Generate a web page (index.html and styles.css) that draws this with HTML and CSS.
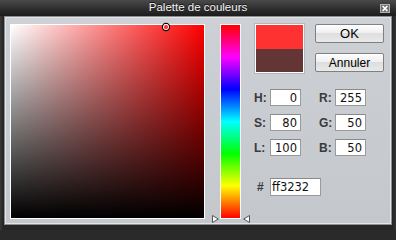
FILE: index.html
```html
<!DOCTYPE html>
<html lang="fr">
<head>
<meta charset="utf-8">
<title>Palette de couleurs</title>
<link rel="stylesheet" href="styles.css">
</head>
<body>
<div class="window">
  <div class="titlebar">
    <span class="title">Palette de couleurs</span>
    <svg class="close" width="10" height="9" viewBox="0 0 10 9">
      <rect x="0.5" y="0.5" width="9" height="8" fill="#707070" stroke="#b0b0b0"/>
      <path d="M2.6 2 L7.4 7 M7.4 2 L2.6 7" stroke="#fff" stroke-width="1.7"/>
    </svg>
  </div>
  <div class="panel">
    <div class="sv">
      <svg class="sv-marker" width="10" height="10" viewBox="0 0 10 10">
        <circle cx="5" cy="5" r="3.6" fill="none" stroke="#000" stroke-width="1.1"/>
        <circle cx="5" cy="5" r="2.6" fill="none" stroke="#fff" stroke-width="0.9"/>
      </svg>
    </div>
    <div class="hue-wrap">
      <div class="hue"></div>
      <svg class="tri tri-left" width="7" height="8" viewBox="0 0 7 8">
        <polygon points="0.5,0.5 6.3,4 0.5,7.5" fill="#fff" stroke="#555" stroke-width="1" stroke-linejoin="round"/>
      </svg>
      <svg class="tri tri-right" width="7" height="8" viewBox="0 0 7 8">
        <polygon points="6.5,0.5 0.7,4 6.5,7.5" fill="#fff" stroke="#555" stroke-width="1" stroke-linejoin="round"/>
      </svg>
    </div>
    <div class="side">
      <div class="top-row">
        <div class="swatch">
          <div class="swatch-new"></div>
          <div class="swatch-old"></div>
        </div>
        <div class="buttons">
          <button class="btn">OK</button>
          <button class="btn">Annuler</button>
        </div>
      </div>
      <div class="fields">
        <span class="lbl">H:</span><input class="fld" value="0" readonly>
        <span class="lbl lbl-right">R:</span><input class="fld" value="255" readonly>
        <span class="lbl">S:</span><input class="fld" value="80" readonly>
        <span class="lbl lbl-right">G:</span><input class="fld" value="50" readonly>
        <span class="lbl">L:</span><input class="fld" value="100" readonly>
        <span class="lbl lbl-right">B:</span><input class="fld" value="50" readonly>
      </div>
      <div class="hex-row">
        <span class="lbl hash">#</span><input class="fld hex" value="ff3232" readonly>
      </div>
    </div>
  </div>
</div>
</body>
</html>
```

FILE: styles.css
```css
* { box-sizing: border-box; }

body {
  margin: 0;
  background: #2a2a2a;
  font-family: "Liberation Sans", Arial, sans-serif;
}

.window {
  width: 396px;
  height: 230px;
  display: flex;
  flex-direction: column;
  background: linear-gradient(to right, #3a3a3a, #262626 3px, #262626 393px, #343434);
}

.titlebar {
  height: 16px;
  position: relative;
  display: flex;
  justify-content: center;
  align-items: flex-start;
  background: linear-gradient(#4a4a4a, #2c2c2c 60%, #1c1c1c);
}

.title {
  font-size: 11.5px;
  line-height: 14px;
  color: #f4f4f4;
  text-shadow: 0 -1px 0 #111;
}

.close {
  position: absolute;
  top: 4px;
  right: 6px;
}

.panel {
  flex: 1;
  margin: 0 4px 5px 4px;
  border: 1px solid #8a8d91;
  box-shadow: inset 0 0 0 1px #e2e4e6;
  background: linear-gradient(#cdd0d4, #c4c7cb);
  display: flex;
  align-items: flex-start;
  padding: 7px 0 0 5px;
}

.sv {
  position: relative;
  width: 195px;
  height: 195px;
  border: 1px solid #fff;
  background:
    linear-gradient(to bottom, rgba(0,0,0,0), #000),
    linear-gradient(to right, #fff, #f00);
}

.sv-marker {
  position: absolute;
  left: 150px;
  top: -3px;
}

.hue-wrap {
  position: relative;
  margin-left: 15px;
}

.hue {
  width: 21px;
  height: 195px;
  border: 1px solid #fff;
  background: linear-gradient(to bottom,
    #f00 0%, #f0f 16.67%, #00f 33.33%, #0ff 50%,
    #0f0 66.67%, #ff0 83.33%, #f00 100%);
}

.tri {
  position: absolute;
  top: 191px;
}

.tri-left { left: -8px; }
.tri-right { left: 23px; }

.side {
  margin-left: 14px;
  display: flex;
  flex-direction: column;
}

.top-row {
  display: flex;
  gap: 11px;
}

.swatch {
  width: 49px;
  height: 49px;
  border: 1px solid #fff;
  box-shadow: 0 0 0 1px #b4b7ba;
  display: flex;
  flex-direction: column;
}

.swatch-new { flex: 1; background: #ff3232; }
.swatch-old { flex: 1; background: #643535; }

.buttons {
  display: flex;
  flex-direction: column;
  gap: 10px;
}

.btn {
  width: 69px;
  height: 19px;
  padding: 0;
  border: 1px solid #808080;
  border-radius: 2px;
  background: linear-gradient(#fdfdfd, #efefef 50%, #dedede 50%, #e9e9e9);
  box-shadow: inset 0 1px 0 #fff;
  font-family: "Liberation Sans", Arial, sans-serif;
  font-size: 12px;
  color: #000;
}

.btn:first-child { font-size: 13px; }

.fields {
  margin-top: 16px;
  margin-left: -1px;
  display: grid;
  grid-template-columns: 16px 31px 34px 31px;
  grid-auto-rows: 17px;
  row-gap: 8px;
}

.lbl {
  display: flex;
  align-items: center;
  font-weight: bold;
  font-size: 12px;
  color: #3a3a3a;
}

.lbl-right { padding-left: 18px; }

.fld {
  width: 31px;
  height: 17px;
  margin: 0;
  padding: 0 3px 0 0;
  border: 1px solid #9a9a9a;
  border-top-color: #8a8a8a;
  background: #fff;
  font-family: "DejaVu Sans", sans-serif;
  font-size: 11.5px;
  color: #111;
  text-align: right;
  outline: none;
}

.hex-row {
  margin-top: 22px;
  display: flex;
  align-items: center;
}

.hash {
  width: 15px;
  padding-left: 2px;
}

.fld.hex {
  width: 51px;
  height: 18px;
  text-align: left;
  padding: 0 0 0 1px;
}
```
